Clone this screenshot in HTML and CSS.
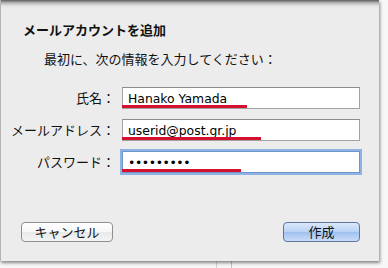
FILE: index.html
```html
<!DOCTYPE html>
<html lang="ja">
<head>
  <meta charset="UTF-8">
  <title>メールアカウントを追加</title>
  <link rel="stylesheet" href="styles.css">
</head>
<body>

<div class="sheet">
  <h1 class="sheet-title">メールアカウントを追加</h1>
  <p class="sheet-lead">最初に、次の情報を入力してください：</p>

  <form class="account-form">
    <label for="name">氏名：</label>
    <div class="field">
      <input type="text" id="name" value="Hanako Yamada">
      <span class="mark" style="width: 125px"></span>
    </div>

    <label for="mail">メールアドレス：</label>
    <div class="field">
      <input type="text" id="mail" value="userid@post.gr.jp">
      <span class="mark" style="width: 139px"></span>
    </div>

    <label for="pass">パスワード：</label>
    <div class="field">
      <input type="password" id="pass" class="focused" value="password1">
      <span class="mark" style="width: 119px"></span>
    </div>
  </form>

  <div class="buttons">
    <button class="btn" type="button">キャンセル</button>
    <button class="btn btn-default" type="button">作成</button>
  </div>
</div>

</body>
</html>
```

FILE: styles.css
```css
body {
  margin: 0;
  width: 388px;
  height: 268px;
  overflow: hidden;
  font-family: "Noto Sans CJK JP", "DejaVu Sans", sans-serif;
  font-size: 13px;
  color: #111;
  background:
    linear-gradient(90deg, transparent 216px, #d4d4d4 216px, #d4d4d4 217px, transparent 217px, transparent 231px, #c4c4c4 231px, #c4c4c4 232px, transparent 232px),
    #f7f7f7;
}

.sheet {
  width: 379px;
  height: 261px;
  box-sizing: border-box;
  border-left: 1px solid #b4b4b4;
  background: linear-gradient(#5e5e5e, #b9b9b9 3px, #e4e4e4 6px, #ececec 9px);
  box-shadow: 1px 2px 3px rgba(0, 0, 0, 0.45);
  display: flex;
  flex-direction: column;
  padding: 20px 0 19px 0;
}

.sheet-title {
  margin: 0 0 0 22px;
  font-size: 13px;
  font-weight: bold;
  line-height: 20px;
}

.sheet-lead {
  margin: 9px 0 0 43px;
  line-height: 20px;
}

.account-form {
  margin-top: 18px;
  display: grid;
  grid-template-columns: 114px 238px;
  column-gap: 7px;
  row-gap: 10px;
  align-items: center;
}

.account-form label {
  text-align: right;
  line-height: 22px;
  white-space: nowrap;
}

.field {
  position: relative;
  height: 22px;
}

.field input {
  width: 100%;
  height: 22px;
  box-sizing: border-box;
  margin: 0;
  padding: 0 5px;
  border: 1px solid #a2a2a2;
  border-top-color: #8c8c8c;
  background: #fff;
  font-family: "DejaVu Sans", sans-serif;
  font-size: 12.4px;
  color: #000;
  outline: none;
}

.field input.focused {
  border-color: #6f95c8;
  box-shadow: 0 0 0 2px rgba(110, 160, 225, 0.75);
  letter-spacing: -0.4px;
}

.mark {
  position: absolute;
  left: 0;
  bottom: 1px;
  height: 3px;
  background: #d3112f;
}

.buttons {
  margin-top: auto;
  display: flex;
  justify-content: space-between;
  padding: 0 19px 0 20px;
}

.btn {
  height: 20px;
  width: 92px;
  padding: 0;
  border: 1px solid #8f8f8f;
  border-radius: 4px;
  background: linear-gradient(#ffffff, #f7f7f7 50%, #e9e9e9 51%, #f4f4f4);
  font-family: "Noto Sans CJK JP", sans-serif;
  font-size: 13px;
  line-height: 18px;
  color: #111;
}

.btn-default {
  width: 77px;
  border-color: #5d75a0;
  background: linear-gradient(#dbe8fb, #b9d2f5 50%, #9fc0ef 51%, #c9ddf9);
}
```
